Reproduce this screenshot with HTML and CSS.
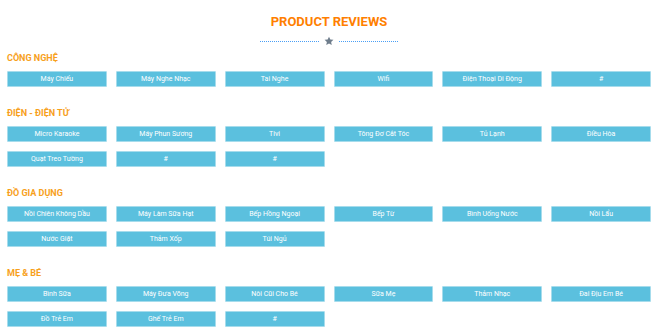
FILE: index.html
```html
<!DOCTYPE html>
<html lang="vi">
<head>
    <meta charset="UTF-8">
    <meta name="viewport" content="width=device-width, initial-scale=1.0">
    <title>Product Reviews</title>
    <link rel="stylesheet" href="styles.css">
</head>
<body>
    <div class="page">
        <h1 class="title">PRODUCT REVIEWS</h1>
        <div class="divider">
            <span class="line"></span>
            <svg class="star" viewBox="0 0 24 24" width="10" height="10"><path d="M12 1.5l3.2 6.9 7.4.8-5.5 5.1 1.5 7.4L12 18l-6.6 3.7 1.5-7.4L1.4 9.2l7.4-.8z"/></svg>
            <span class="line"></span>
        </div>

        <div class="section">
            <h2>CÔNG NGHỆ</h2>
            <div class="grid">
                <a class="btn">Máy Chiếu</a>
                <a class="btn">Máy Nghe Nhạc</a>
                <a class="btn">Tai Nghe</a>
                <a class="btn">Wifi</a>
                <a class="btn">Điện Thoại Di Động</a>
                <a class="btn">#</a>
            </div>
        </div>

        <div class="section">
            <h2>ĐIỆN - ĐIỆN TỬ</h2>
            <div class="grid">
                <a class="btn">Micro Karaoke</a>
                <a class="btn">Máy Phun Sương</a>
                <a class="btn">Tivi</a>
                <a class="btn">Tông Đơ Cắt Tóc</a>
                <a class="btn">Tủ Lạnh</a>
                <a class="btn">Điều Hòa</a>
                <a class="btn">Quạt Treo Tường</a>
                <a class="btn">#</a>
                <a class="btn">#</a>
            </div>
        </div>

        <div class="section">
            <h2>ĐỒ GIA DỤNG</h2>
            <div class="grid">
                <a class="btn">Nồi Chiên Không Dầu</a>
                <a class="btn">Máy Làm Sữa Hạt</a>
                <a class="btn">Bếp Hồng Ngoại</a>
                <a class="btn">Bếp Từ</a>
                <a class="btn">Bình Uống Nước</a>
                <a class="btn">Nồi Lẩu</a>
                <a class="btn">Nước Giặt</a>
                <a class="btn">Thảm Xốp</a>
                <a class="btn">Túi Ngủ</a>
            </div>
        </div>

        <div class="section">
            <h2>MẸ &amp; BÉ</h2>
            <div class="grid">
                <a class="btn">Bình Sữa</a>
                <a class="btn">Máy Đưa Võng</a>
                <a class="btn">Nôi Cũi Cho Bé</a>
                <a class="btn">Sữa Mẹ</a>
                <a class="btn">Thảm Nhạc</a>
                <a class="btn">Đai Địu Em Bé</a>
                <a class="btn">Đồ Trẻ Em</a>
                <a class="btn">Ghế Trẻ Em</a>
                <a class="btn">#</a>
            </div>
        </div>
    </div>
</body>
</html>
```

FILE: styles.css
```css
* {
    margin: 0;
    padding: 0;
    box-sizing: border-box;
}

body {
    font-family: Roboto, "Noto Sans", sans-serif;
    background: #fff;
}

.page {
    padding: 14px 9px 0 7px;
}

.title {
    text-align: center;
    font-size: 13px;
    line-height: 16px;
    font-weight: 700;
    color: #ff7f00;
}

.divider {
    display: flex;
    justify-content: center;
    align-items: center;
    gap: 5px;
    height: 8px;
    margin-top: 7px;
}

.divider .line {
    width: 59px;
    border-top: 1px dotted #4a9ff5;
}

.divider .star {
    fill: #6f7d8c;
}

.section {
    margin-top: 7px;
}

.section + .section {
    margin-top: 20px;
}

.section h2 {
    font-size: 9px;
    line-height: 12px;
    font-weight: 700;
    color: #f7a01c;
    margin-bottom: 7px;
}

.grid {
    display: grid;
    grid-template-columns: repeat(6, 1fr);
    gap: 9px;
}

.btn {
    display: flex;
    align-items: center;
    justify-content: center;
    height: 16px;
    background: #5bc0de;
    border: 1px solid #a6dcec;
    border-radius: 1px;
    color: #fff;
    font-size: 7px;
    white-space: nowrap;
}
```
